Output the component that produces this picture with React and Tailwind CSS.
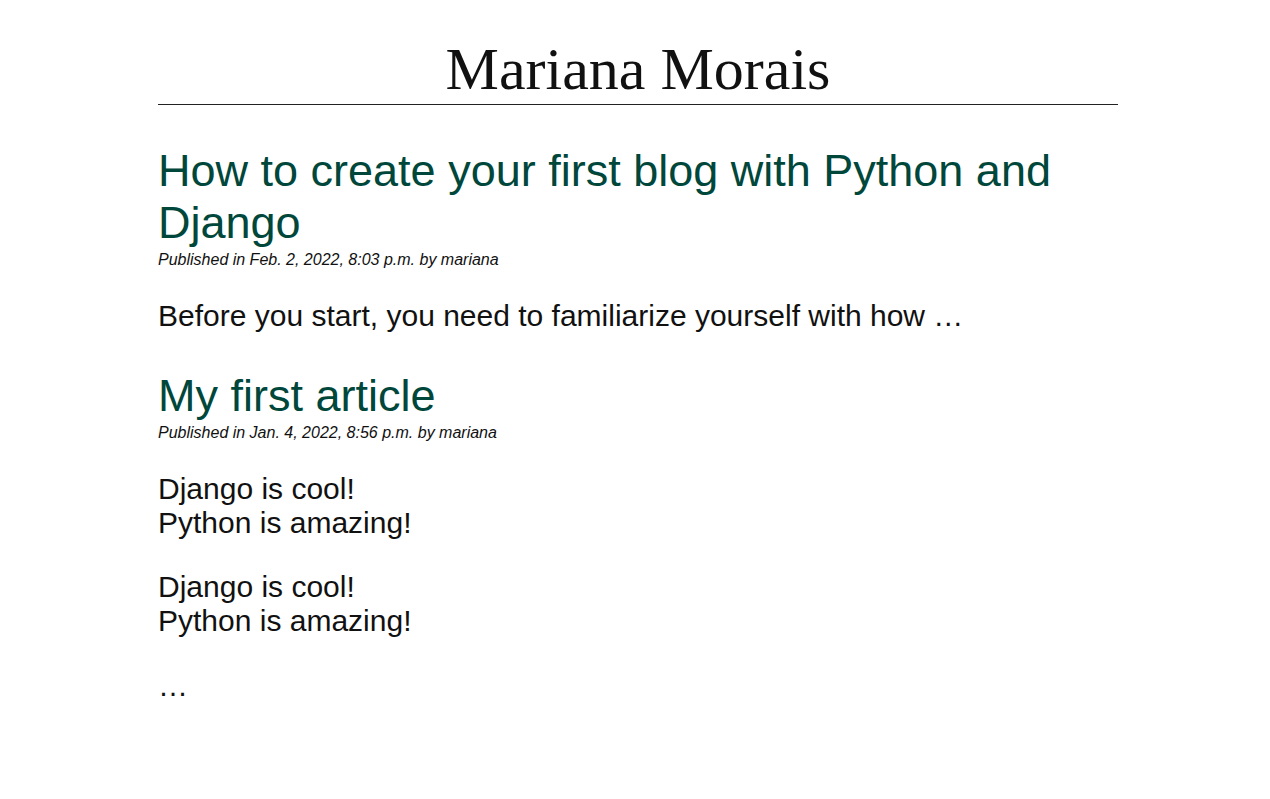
import React from 'react';

const posts = [
  {
    title: 'How to create your first blog with Python and Django',
    meta: 'Published in Feb. 2, 2022, 8:03 p.m. by mariana',
    body: [['Before you start, you need to familiarize yourself with how …']],
  },
  {
    title: 'My first article',
    meta: 'Published in Jan. 4, 2022, 8:56 p.m. by mariana',
    body: [
      ['Django is cool!', 'Python is amazing!'],
      ['Django is cool!', 'Python is amazing!'],
      ['…'],
    ],
  },
];

const App = () => {
  return (
    <div className="min-h-screen bg-white text-[#111]" style={{ fontFamily: '"Liberation Sans", Arial, sans-serif' }}>
      <div className="w-[960px] ml-[158px]">
        {/* Header */}
        <header className="border-b border-[#222] pt-[36px] pb-[2px]">
          <h1 className="text-center text-[60px] leading-[66px] text-[#111] font-['Liberation_Serif',serif]">
            Mariana Morais
          </h1>
        </header>

        {/* Posts */}
        <main className="pt-[40px]">
          {posts.map((post, i) => (
            <article key={i} className="mb-[37px]">
              <h2 className="text-[45px] leading-[52px] text-[#00473b]">{post.title}</h2>
              <p className="mt-[2px] text-[16px] italic leading-[18px]">{post.meta}</p>
              <div className="mt-[30px]">
                {post.body.map((para, j) => (
                  <p key={j} className="text-[30px] leading-[34px] mb-[30px] last:mb-0 [&:last-child:not(:first-child)]:mt-[31px]">
                    {para.map((line, k) => (
                      <React.Fragment key={k}>
                        {line}
                        {k < para.length - 1 && <br />}
                      </React.Fragment>
                    ))}
                  </p>
                ))}
              </div>
            </article>
          ))}
        </main>
      </div>
    </div>
  );
};

export default App;
